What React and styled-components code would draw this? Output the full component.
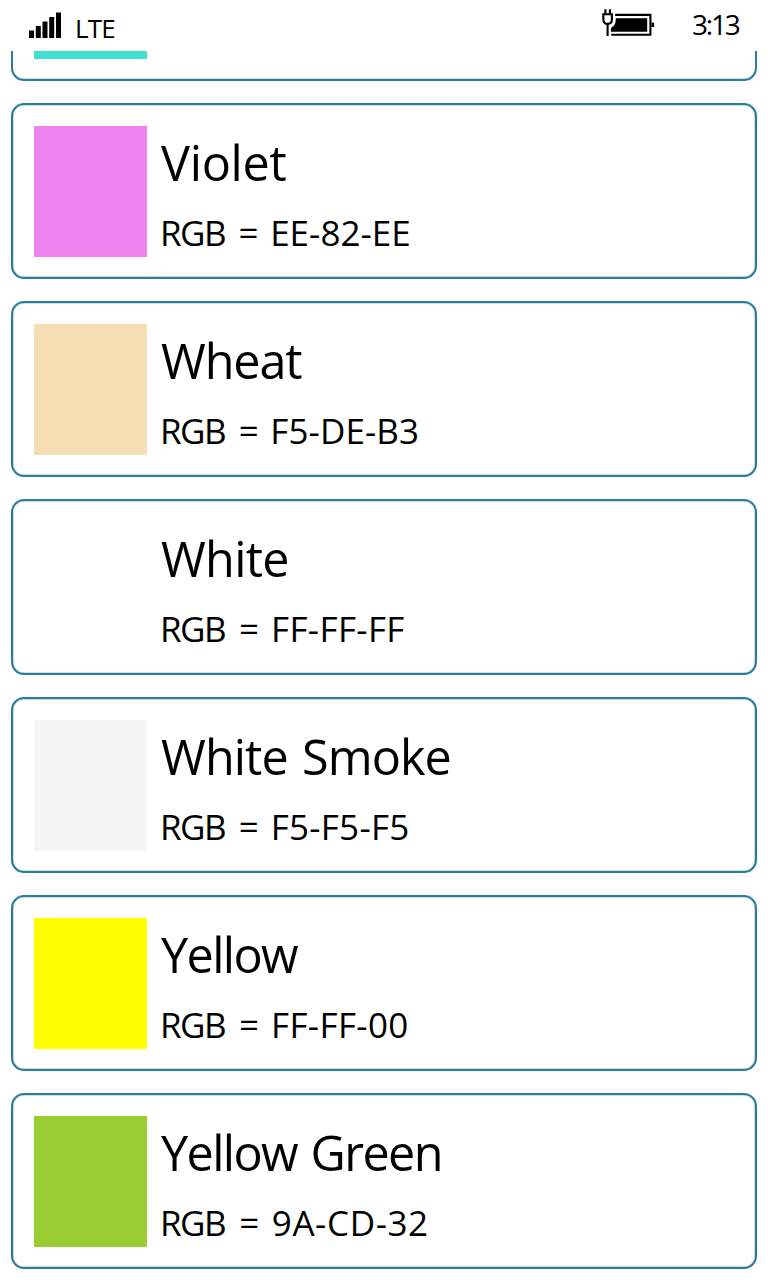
import React from "react";
import styled, { createGlobalStyle } from "styled-components";

const GlobalStyle = createGlobalStyle`
  * { box-sizing: border-box; }
  body {
    margin: 0;
    background: #fff;
    color: #000;
    font-family: "Segoe UI", "Open Sans", "Noto Sans", sans-serif;
  }
`;

const Screen = styled.div`
  display: flex;
  flex-direction: column;
  width: 768px;
  height: 1280px;
  overflow: hidden;
`;

const StatusBar = styled.header`
  display: flex;
  flex: none;
  height: 51px;
  padding: 0 29px;
`;

const SignalIcon = styled.svg`
  display: block;
  width: 33px;
  height: 26px;
  margin-top: 12px;
`;

const Network = styled.span`
  margin: 10px auto 0 13px;
  font-size: 26px;
  line-height: 36px;
  letter-spacing: -0.8px;
`;

const BatteryIcon = styled.svg`
  display: block;
  width: 54px;
  height: 30px;
  margin-top: 8px;
`;

const Clock = styled.time`
  margin: 6px 0 0 36px;
  width: 47px;
  font-size: 28px;
  line-height: 36px;
  letter-spacing: -2.2px;
  white-space: nowrap;
`;

const List = styled.main`
  display: flex;
  flex: 1;
  flex-direction: column;
  gap: 22px;
  padding: 0 11px 11px;
`;

const Card = styled.article`
  display: flex;
  flex: none;
  height: 176px;
  padding: 21px;
  border: 2px solid #2b7c9b;
  border-radius: 13px;
  box-shadow: inset 0 0 0 0.5px rgba(43, 124, 155, 0.5);
`;

const CardEnd = styled(Card)`
  height: 30px;
  padding-top: 0;
  border-top: 0;
  border-radius: 0 0 13px 13px;
  box-shadow: inset 0 -0.5px 0 0 rgba(43, 124, 155, 0.5);
`;

const Swatch = styled.div`
  flex: none;
  width: 113px;
  height: ${(p) => p.$height || 131}px;
  background: ${(p) => p.$color};
`;

const Details = styled.div`
  margin-left: 14px;
  white-space: nowrap;
`;

const Name = styled.h2`
  margin: 3px 0 0;
  font-size: 48.5px;
  font-weight: 400;
  line-height: 66px;
  letter-spacing: ${(p) => p.$tracking}px;
  word-spacing: 2.5px;
`;

const Value = styled.p`
  margin: 14px 0 0 -1px;
  font-size: 35px;
  line-height: 48px;
  letter-spacing: ${(p) => p.$tracking}px;
  word-spacing: 2.3px;
`;

const Label = styled.span`
  margin-right: 2px;
  letter-spacing: -1.5px;
`;

const colors = [
  { name: "Violet", rgb: "EE-82-EE", color: "#ee82ee", nameTracking: -0.25, rgbTracking: 0.05 },
  { name: "Wheat", rgb: "F5-DE-B3", color: "#f5deb3", nameTracking: -1.1, rgbTracking: 0.1 },
  { name: "White", rgb: "FF-FF-FF", color: "#ffffff", nameTracking: -0.7, rgbTracking: 0.35 },
  { name: "White Smoke", rgb: "F5-F5-F5", color: "#f5f5f5", nameTracking: -0.9, rgbTracking: 0.25 },
  { name: "Yellow", rgb: "FF-FF-00", color: "#ffff00", nameTracking: -1.6, rgbTracking: 0.35 },
  { name: "Yellow Green", rgb: "9A-CD-32", color: "#9acd32", nameTracking: -1.6, rgbTracking: 0.6 },
];

export default function App() {
  return (
    <Screen>
      <GlobalStyle />
      <StatusBar>
        <SignalIcon viewBox="0 0 33 26" aria-label="Signal">
          <path d="M0 18.5h5V26H0zM6.8 14h5v12h-5zM13.5 9.5h5V26h-5zM20.2 5h5v21h-5zM27 .5h5V26h-5z" />
        </SignalIcon>
        <Network>LTE</Network>
        <BatteryIcon viewBox="0 0 54 30" aria-label="Charging">
          <path d="M13.2 6.9H48.4V26.8H9.2" fill="none" stroke="#000" strokeWidth="2.1" />
          <path d="M13.8 10.2H45.2V23.8H9V19.8C12.5 18 13.8 15.5 13.8 10.2z" />
          <path d="M49.4 14.6h2.7v4.4h-2.7z" />
          <path d="M1.3 6.2H9.9V11C9.9 14.3 8.2 15.9 5.6 15.9S1.3 14.3 1.3 11z" fill="none" stroke="#000" strokeWidth="2.1" />
          <path d="M3.4 1.2v5M7.9 1.2v5M5.6 16v12" fill="none" stroke="#000" strokeWidth="2.1" />
        </BatteryIcon>
        <Clock>3:13</Clock>
      </StatusBar>
      <List>
        <CardEnd>
          <Swatch $color="#40e0d0" $height={8} />
        </CardEnd>
        {colors.map((c) => (
          <Card key={c.name}>
            <Swatch $color={c.color} />
            <Details>
              <Name $tracking={c.nameTracking}>{c.name}</Name>
              <Value $tracking={c.rgbTracking}>
                <Label>RGB</Label> = {c.rgb}
              </Value>
            </Details>
          </Card>
        ))}
      </List>
    </Screen>
  );
}
